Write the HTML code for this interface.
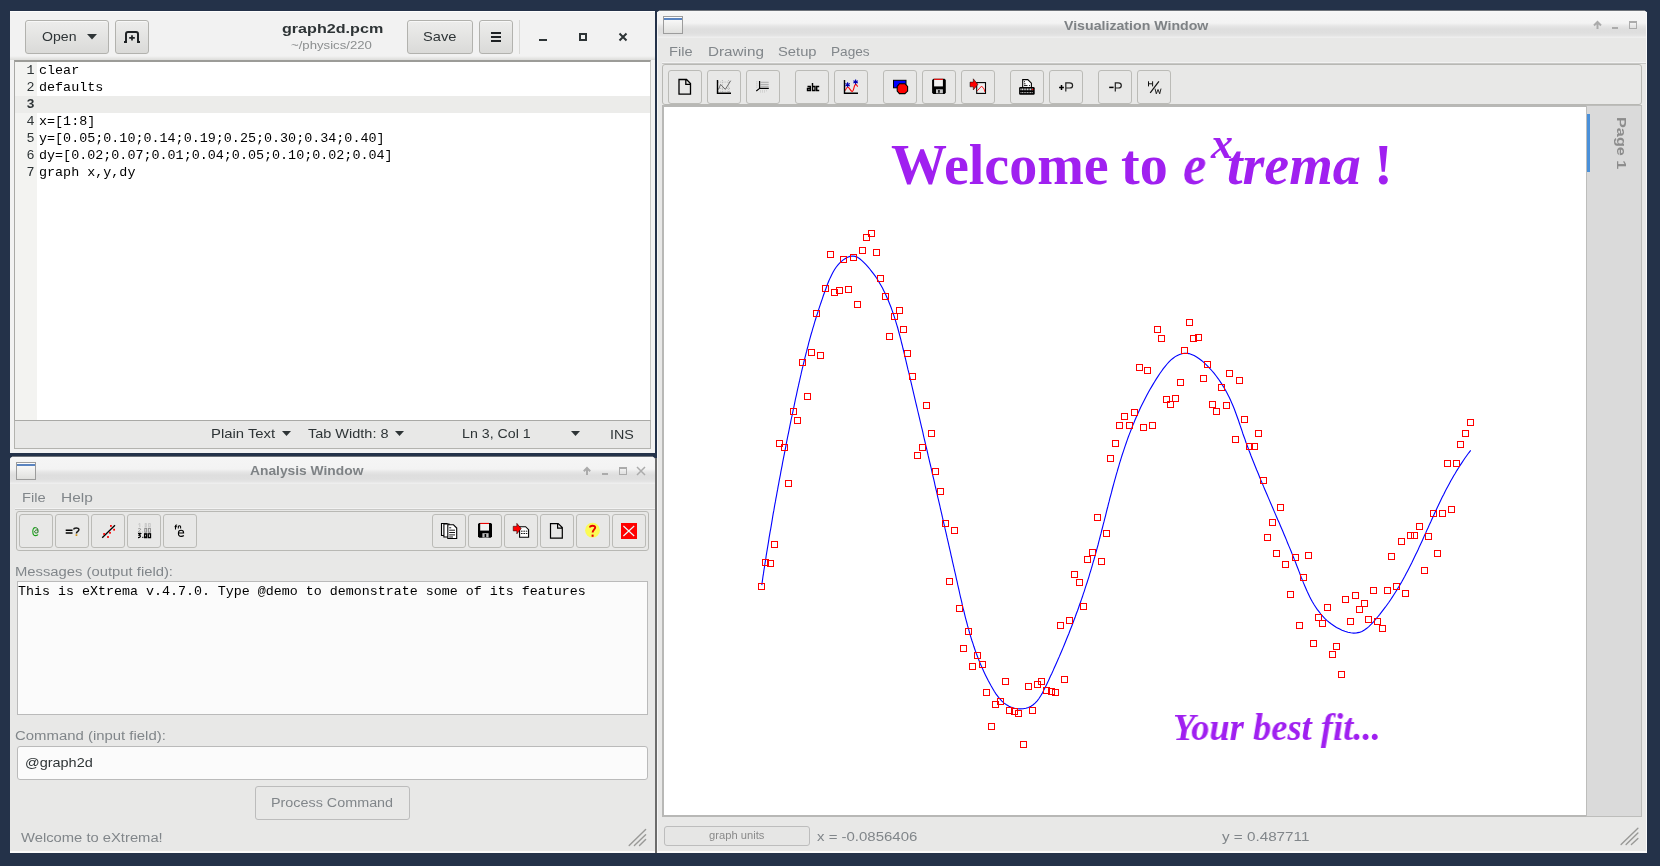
<!DOCTYPE html>
<html><head><meta charset="utf-8">
<style>
*{box-sizing:border-box;margin:0;padding:0}
html,body{width:1660px;height:866px;overflow:hidden;background:#243249;font-family:"Liberation Sans",sans-serif}
.a{position:absolute}
.t{position:absolute;white-space:nowrap;line-height:1;transform-origin:0 0;will-change:transform}
.mono{font-family:"Liberation Mono",monospace;will-change:transform}
.btn{position:absolute;border:1px solid #b2b2ae;border-radius:3px;background:linear-gradient(#ededec,#dadad8);box-shadow:inset 0 1px #f8f8f8}
.tb{position:absolute;width:34px;height:34px;border:1px solid #bbbbb7;border-radius:3px;background:#e8e8e7}
.tbar{position:absolute;background:linear-gradient(#f9f9f9 0px,#f5f5f5 2px,#f3f3f3 12px,#e6e6e6 15px,#dedede 18px,#dfdfdf 22px,#e5e5e5 25px,#eeeeee 26px,#eeeeee 27px)}
svg{position:absolute;overflow:visible}
</style></head><body>

<!-- ================= GEDIT WINDOW ================= -->
<div class="a" style="left:10px;top:11px;width:645px;height:442px;background:#f2f2f2"></div>
<div class="a" style="left:10px;top:11px;width:645px;height:1px;background:#fdfdfd"></div>
<div class="a" style="left:10px;top:56px;width:645px;height:4px;background:linear-gradient(#f2f2f2,#dcdcda)"></div>
<div class="btn" style="left:25px;top:20px;width:84px;height:34px"></div>
<svg style="left:87px;top:34px" width="11" height="7"><path d="M0,0 L10,0 L5,5.5 Z" fill="#2e3436"/></svg>
<div class="btn" style="left:115px;top:20px;width:34px;height:34px"></div>

<div class="btn" style="left:407px;top:20px;width:66px;height:34px"></div>
<div class="btn" style="left:479px;top:20px;width:34px;height:34px"></div>
<div class="a" style="left:491px;top:32px;width:10px;height:2px;background:#1e2224"></div>
<div class="a" style="left:491px;top:36px;width:10px;height:2px;background:#1e2224"></div>
<div class="a" style="left:491px;top:40px;width:10px;height:2px;background:#1e2224"></div>
<div class="a" style="left:519px;top:20px;width:1px;height:34px;background:#d9d9d7"></div>
<div class="a" style="left:539px;top:38.5px;width:8px;height:2.5px;background:#2e3436"></div>
<div class="a" style="left:579px;top:33px;width:8px;height:8px;border:2px solid #2e3436"></div>
<svg style="left:619px;top:33px" width="8" height="8"><path d="M0.5,0.5 L7.5,7.5 M7.5,0.5 L0.5,7.5" stroke="#2e3436" stroke-width="2"/></svg>

<!-- text view -->
<div class="a" style="left:14px;top:60px;width:637px;height:361px;background:#fff;border-left:1px solid #a9a9a6;border-top:2px solid #9c9c98;border-right:1px solid #c8c8c5"></div>
<div class="a" style="left:15px;top:62px;width:22px;height:358px;background:#f3f3f1"></div>
<div class="a" style="left:15px;top:96px;width:635px;height:17px;background:#ececea"></div>
<div class="mono" style="position:absolute;left:15px;top:62px;width:19.5px;text-align:right;font-size:13.4px;line-height:17px;color:#2e3436">1<br>2<br><b>3</b><br>4<br>5<br>6<br>7</div>
<div class="mono" style="position:absolute;left:39px;top:62px;font-size:13.4px;line-height:17px;color:#000;white-space:pre">clear
defaults

x=[1:8]
y=[0.05;0.10;0.14;0.19;0.25;0.30;0.34;0.40]
dy=[0.02;0.07;0.01;0.04;0.05;0.10;0.02;0.04]
graph x,y,dy</div>
<!-- status bar -->
<div class="a" style="left:14px;top:420px;width:637px;height:29px;background:#e8e8e7;border:1px solid #b3b3af;border-top-color:#a9a9a6"></div>
<svg style="left:282px;top:431px" width="10" height="6"><path d="M0,0 L9,0 L4.5,5 Z" fill="#2e3436"/></svg>
<svg style="left:395px;top:431px" width="10" height="6"><path d="M0,0 L9,0 L4.5,5 Z" fill="#2e3436"/></svg>
<svg style="left:571px;top:431px" width="10" height="6"><path d="M0,0 L9,0 L4.5,5 Z" fill="#2e3436"/></svg>

<!-- ================= ANALYSIS WINDOW ================= -->
<div class="a" style="left:10px;top:457px;width:645px;height:396px;background:#e8e8e7;border-radius:3px 3px 0 0;overflow:hidden">
  <div class="tbar" style="left:0;top:0;width:645px;height:27px"></div>
</div>
<div class="a" style="left:16px;top:462px;width:20px;height:18px;border:1px solid #9c9c9c;background:linear-gradient(#fdfdfd,#e0e0de)"></div>
<div class="a" style="left:17px;top:464px;width:18px;height:2px;background:#5a84c0"></div>
<svg style="left:583px;top:467px" width="9" height="9"><path d="M4,8 L4,1.5 M0.8,4.3 L4,1 L7.2,4.3" fill="none" stroke="#ababab" stroke-width="2"/></svg>
<div class="a" style="left:602px;top:473px;width:6px;height:2px;background:#ababab"></div>
<div class="a" style="left:619px;top:467px;width:8px;height:8px;border:1px solid #ababab;border-top-width:2px"></div>
<svg style="left:636px;top:466px" width="10" height="10"><path d="M1,1 L9,9 M9,1 L1,9" stroke="#ababab" stroke-width="1.5"/></svg>
<div class="a" style="left:15px;top:508px;width:640px;height:1px;background:#f2f2f2"></div><div class="a" style="left:15px;top:509px;width:640px;height:1px;background:#c8c8c6"></div>
<div class="a" style="left:16px;top:511px;width:633px;height:40px;border:1px solid #b8b8b4;border-radius:3px"></div>
<div class="tb" style="left:19px;top:514px"></div>
<div class="tb" style="left:55px;top:514px"></div>
<div class="tb" style="left:91px;top:514px"></div>
<div class="tb" style="left:127px;top:514px"></div>
<div class="tb" style="left:163px;top:514px"></div>
<div class="tb" style="left:432px;top:514px"></div>
<div class="tb" style="left:468px;top:514px"></div>
<div class="tb" style="left:504px;top:514px"></div>
<div class="tb" style="left:540px;top:514px"></div>
<div class="tb" style="left:576px;top:514px"></div>
<div class="tb" style="left:612px;top:514px"></div>
<div class="a" style="left:17px;top:581px;width:631px;height:134px;background:#fbfbfb;border:1px solid #bababa"></div>
<div class="a" style="left:17px;top:746px;width:631px;height:34px;background:#fbfbfb;border:1px solid #bababa;border-radius:3px"></div>
<div class="a" style="left:255px;top:786px;width:155px;height:34px;border:1px solid #bcbcbc;border-radius:3px;background:#e8e8e7"></div>


<div class="a" style="left:655px;top:458px;width:2px;height:395px;background:#6c6c6c"></div>
<!-- ================= VISUALIZATION WINDOW ================= -->
<div class="a" style="left:657px;top:11px;width:990px;height:842px;background:#e8e8e7;border-radius:3px 3px 0 0;overflow:hidden">
  <div class="tbar" style="left:0;top:0;width:990px;height:27px"></div>
</div>
<div class="a" style="left:663px;top:16px;width:20px;height:18px;border:1px solid #9c9c9c;background:linear-gradient(#fdfdfd,#e0e0de)"></div>
<div class="a" style="left:664px;top:18px;width:18px;height:2px;background:#5a84c0"></div>
<svg style="left:1593px;top:21px" width="9" height="9"><path d="M4.5,8 L4.5,1.5 M1,4.5 L4.5,1 L8,4.5" fill="none" stroke="#ababab" stroke-width="2"/></svg>
<div class="a" style="left:1612px;top:27px;width:6px;height:2px;background:#ababab"></div>
<div class="a" style="left:1629px;top:21px;width:8px;height:8px;border:1px solid #ababab;border-top-width:2px"></div>
<div class="a" style="left:662px;top:62px;width:985px;height:1px;background:#f2f2f2"></div><div class="a" style="left:662px;top:63px;width:985px;height:1px;background:#c8c8c6"></div>
<div class="a" style="left:662px;top:64px;width:980px;height:41px;border:1px solid #b8b8b4;border-radius:3px"></div>
<div class="tb" style="left:668px;top:70px"></div>
<div class="tb" style="left:707px;top:70px"></div>
<div class="tb" style="left:746px;top:70px"></div>
<div class="tb" style="left:795px;top:70px"></div>
<div class="tb" style="left:834px;top:70px"></div>
<div class="tb" style="left:883px;top:70px"></div>
<div class="tb" style="left:922px;top:70px"></div>
<div class="tb" style="left:961px;top:70px"></div>
<div class="tb" style="left:1010px;top:70px"></div>
<div class="tb" style="left:1049px;top:70px"></div>
<div class="tb" style="left:1098px;top:70px"></div>
<div class="tb" style="left:1137px;top:70px"></div>
<!-- plot area -->
<div class="a" style="left:662px;top:105px;width:925px;height:712px;background:#fff;border-left:2px solid #b8b8b6;border-top:2px solid #b8b8b6;border-bottom:2px solid #b8b8b6"></div>
<div class="a" style="left:1586px;top:105px;width:56px;height:712px;background:#dadada;border:1px solid #bdbdbb"></div>
<div class="a" style="left:1587px;top:114px;width:3px;height:58px;background:#4a90d9"></div>

<!-- status -->
<div class="a" style="left:664px;top:826px;width:146px;height:20px;border:1px solid #bdbdbd;border-radius:3px;background:#e6e6e5"></div>


<span class="t" style="left:42.10px;top:30px;font-family:'Liberation Sans';font-size:13px;color:#2e3436;transform:scaleX(1.0839)">Open</span>
<span class="t" style="left:282.10px;top:22px;font-family:'Liberation Sans';font-size:13.5px;font-weight:bold;color:#2e3436;transform:scaleX(1.1940)">graph2d.pcm</span>
<span class="t" style="left:291.46px;top:40px;font-family:'Liberation Sans';font-size:11.5px;color:#8b8e8f;transform:scaleX(1.1449)">~/physics/220</span>
<span class="t" style="left:423.27px;top:30px;font-family:'Liberation Sans';font-size:13px;color:#2e3436;transform:scaleX(1.1250)">Save</span>
<span class="t" style="left:211.06px;top:427px;font-family:'Liberation Sans';font-size:13px;color:#2e3436;transform:scaleX(1.1436)">Plain Text</span>
<span class="t" style="left:307.70px;top:427px;font-family:'Liberation Sans';font-size:13px;color:#2e3436;transform:scaleX(1.1139)">Tab Width: 8</span>
<span class="t" style="left:461.81px;top:427px;font-family:'Liberation Sans';font-size:13px;color:#2e3436;transform:scaleX(1.0919)">Ln 3, Col 1</span>
<span class="t" style="left:609.50px;top:428px;font-family:'Liberation Sans';font-size:13px;color:#2e3436;transform:scaleX(1.1000)">INS</span>
<span class="t" style="left:249.70px;top:464px;font-family:'Liberation Sans';font-size:13.3px;font-weight:bold;color:#7e8285;transform:scaleX(1.0382)">Analysis Window</span>
<span class="t" style="left:22.13px;top:492px;font-family:'Liberation Sans';font-size:12.5px;color:#81868a;transform:scaleX(1.1737)">File</span>
<span class="t" style="left:61.16px;top:492px;font-family:'Liberation Sans';font-size:12.5px;color:#81868a;transform:scaleX(1.2375)">Help</span>
<span class="t" style="left:15.22px;top:566px;font-family:'Liberation Sans';font-size:12.5px;color:#81868a;transform:scaleX(1.1841)">Messages (output field):</span>
<span class="t" style="left:18.30px;top:585px;font-family:'Liberation Mono';font-size:13px;color:#000;transform:scaleX(1.0248)">This is eXtrema v.4.7.0. Type @demo to demonstrate some of its features</span>
<span class="t" style="left:15.31px;top:730px;font-family:'Liberation Sans';font-size:12.5px;color:#81868a;transform:scaleX(1.1928)">Command (input field):</span>
<span class="t" style="left:25.09px;top:756px;font-family:'Liberation Sans';font-size:13px;color:#2e3436;transform:scaleX(1.1119)">@graph2d</span>
<span class="t" style="left:271.05px;top:797px;font-family:'Liberation Sans';font-size:12.5px;color:#81868a;transform:scaleX(1.1486)">Process Command</span>
<span class="t" style="left:20.50px;top:832px;font-family:'Liberation Sans';font-size:12.5px;color:#81868a;transform:scaleX(1.1815)">Welcome to eXtrema!</span>
<span class="t" style="left:1063.90px;top:19px;font-family:'Liberation Sans';font-size:13.3px;font-weight:bold;color:#7e8285;transform:scaleX(1.0647)">Visualization Window</span>
<span class="t" style="left:669.13px;top:46px;font-family:'Liberation Sans';font-size:12.5px;color:#81868a;transform:scaleX(1.1684)">File</span>
<span class="t" style="left:707.88px;top:46px;font-family:'Liberation Sans';font-size:12.5px;color:#81868a;transform:scaleX(1.2205)">Drawing</span>
<span class="t" style="left:778.22px;top:46px;font-family:'Liberation Sans';font-size:12.5px;color:#81868a;transform:scaleX(1.1806)">Setup</span>
<span class="t" style="left:831.21px;top:46px;font-family:'Liberation Sans';font-size:12.5px;color:#81868a;transform:scaleX(1.0912)">Pages</span>
<span class="t" style="left:708.90px;top:831px;font-family:'Liberation Sans';font-size:10px;color:#8a8a8a;transform:scaleX(1.1184)">graph units</span>
<span class="t" style="left:817.40px;top:831px;font-family:'Liberation Sans';font-size:12.5px;color:#81868a;transform:scaleX(1.1976)">x = -0.0856406</span>
<span class="t" style="left:1221.90px;top:831px;font-family:'Liberation Sans';font-size:12.5px;color:#81868a;transform:scaleX(1.2183)">y = 0.487711</span>
<span class="t" style="left:1626.8px;top:116.8px;font-family:'Liberation Sans';font-size:12.5px;font-weight:bold;color:#8c8c8c;transform:rotate(90deg) scaleX(1.3)">Page 1</span>

<span class="t" style="left:891px;top:137px;font-family:'Liberation Serif',serif;font-weight:bold;font-size:56px;color:#a020f0">Welcome</span>
<span class="t" style="left:1120.5px;top:137px;font-family:'Liberation Serif',serif;font-weight:bold;font-size:56px;color:#a020f0">to</span>
<span class="t" style="left:1183px;top:137px;font-family:'Liberation Serif',serif;font-weight:bold;font-style:italic;font-size:56px;color:#a020f0;transform:scaleX(0.94)">e</span>
<span class="t" style="left:1211px;top:121.5px;font-family:'Liberation Serif',serif;font-weight:bold;font-style:italic;font-size:44px;color:#a020f0">x</span>
<span class="t" style="left:1227px;top:137px;font-family:'Liberation Serif',serif;font-weight:bold;font-style:italic;font-size:56px;color:#a020f0">trema</span>
<span class="t" style="left:1374px;top:137px;font-family:'Liberation Serif',serif;font-weight:bold;font-size:56px;color:#a020f0">!</span>
<span class="t" style="left:1173px;top:708.5px;font-family:'Liberation Serif',serif;font-weight:bold;font-style:italic;font-size:37px;color:#a020f0;transform:scaleX(0.985)">Your best fit...</span>

<div class="a" style="left:10px;top:851px;width:645px;height:1.5px;background:#fafafa"></div>
<div class="a" style="left:657px;top:851px;width:990px;height:1.5px;background:#fafafa"></div>
<div class="a" style="left:1646px;top:12px;width:1px;height:840px;background:#fafafa"></div>
<div class="a" style="left:659px;top:10px;width:986px;height:1px;background:#6e737a"></div>
<div class="a" style="left:12px;top:456px;width:641px;height:1px;background:#6e737a"></div>
<div class="a" style="left:657px;top:12px;width:1px;height:840px;background:#f6f6f6"></div>
<svg width="1660" height="866" style="position:absolute;left:0;top:0;overflow:visible">
<!-- gedit new-tab icon -->
<path d="M126,42.8 L126,34 Q126,32 128,32 L136,32 Q138,32 138,34 L138,42.8" fill="none" stroke="#1f2325" stroke-width="2"/>
<path d="M124,42 L127,42 M137,42 L140,42" stroke="#1f2325" stroke-width="1.8"/>
<path d="M132,35.2 L132,40.6 M129.2,37.9 L134.8,37.9" stroke="#1f2325" stroke-width="1.7"/>
<!-- ===== Vis toolbar ===== -->
<!-- new page -->
<path d="M679,79.5 L686.5,79.5 L690.5,83.5 L690.5,94.2 L679,94.2 Z M685.8,79.5 L685.8,84.3 L690.5,84.3" fill="none" stroke="#000" stroke-width="1.3"/>
<!-- grid chart -->
<g stroke="#a8a8a8" stroke-width="0.8" stroke-dasharray="1 1.2"><path d="M718,82.1 L731,82.1 M718,88.4 L731,88.4 M718,91.3 L731,91.3 M722.4,80 L722.4,93 M728.6,80 L728.6,93"/></g>
<path d="M718.5,89.6 L720.6,84.4 L725.3,89.4 L730.7,80.7" fill="none" stroke="#6a6a6a" stroke-width="1"/>
<path d="M717.5,80 L717.5,93.3 L731,93.3" fill="none" stroke="#000" stroke-width="1.4"/>
<!-- axes -->
<path d="M760.5,82.3 L768.7,82.3 M760.5,84.4 L768.7,84.4 M760.5,86.3 L768.7,86.3" stroke="#9a9a9a" stroke-width="0.8"/>
<g stroke="#b0b0b0" stroke-width="0.7" stroke-dasharray="0.8 1.2"><path d="M756.5,81.5 L756.5,88 M758,81.5 L758,88 M760,90.8 L768,90.8 M760,92 L766,92"/></g>
<path d="M759.6,81 L759.6,88.4 L768.8,88.4 M759.6,88.4 L756.3,91" fill="none" stroke="#000" stroke-width="1.2"/>
<!-- abc -->
<path d="M807.5,86.5 L810.3,86.5 L810.3,90.5 L807.5,90.5 L807.5,88.5 L810.3,88.5 M812.5,83 L812.5,90.5 L815,90.5 L815,86.5 L812.5,86.5 M819.2,86.5 L816.7,86.5 L816.7,90.5 L819.2,90.5" fill="none" stroke="#000" stroke-width="1.4"/>
<!-- data chart -->
<path d="M845.2,90.6 C846.2,88.5 847,87 847.8,87 C849,87 850.8,91.5 852.2,91.5 C853.5,91.5 853.8,87.5 854.6,85.8 C855.1,84.7 855.6,84.2 856,84.4 C856.6,84.8 857.2,85.8 857.7,86.6" fill="none" stroke="#ff0000" stroke-width="1.1"/>
<path d="M844.5,80 L844.5,93.3 L858,93.3" fill="none" stroke="#000" stroke-width="1.4"/>
<g stroke="#0000b0" stroke-width="1.1"><path d="M847.6,82.3 L847.6,87.3 M845.4,83.6 L849.8,86 M849.8,83.6 L845.4,86"/><path d="M855.6,79.4 L855.6,84.4 M853.4,80.7 L857.8,83.1 M857.8,80.7 L853.4,83.1"/></g>
<!-- shapes -->
<rect x="893.5" y="80.3" width="12.5" height="7.5" fill="#0000ff" stroke="#000" stroke-width="1"/>
<path d="M899.4,83.7 L904.9,83.7 L907.6,86.4 L907.6,91.1 L904.9,93.6 L899.4,93.6 L897.2,91.1 L897.2,86.4 Z" fill="#ff0000" stroke="#000" stroke-width="1.1"/>
<!-- floppy -->
<path d="M933.5,78.8 L944.5,78.8 L945.8,80.1 L945.8,92.7 L944.6,93.9 L933.3,93.9 L932.1,92.7 L932.1,80.1 Z" fill="#000"/>
<rect x="934.1" y="79.6" width="8.8" height="6.8" fill="#f2f2f2"/>
<rect x="934.1" y="78.8" width="8.8" height="1" fill="#ff0000"/>
<rect x="936" y="89.3" width="6.9" height="4" fill="#c8c8c8"/><rect x="938.2" y="90" width="1.5" height="2.8" fill="#000"/>
<!-- import -->
<rect x="976.7" y="82.6" width="8.8" height="10.8" fill="#f0f0f0" stroke="#000" stroke-width="1.1"/>
<path d="M977.3,90.8 L981.6,86.1 L984.1,89 L984.8,91.9" fill="none" stroke="#ff0000" stroke-width="0.9"/>
<path d="M970,82.1 L973.3,82.1 L973.3,78.8 L977.8,84.4 L973.3,90 L973.3,86.8 L970,86.8 Z" fill="#ff0000" stroke="#000" stroke-width="0.5"/>
<!-- printer -->
<path d="M1022.7,79.6 L1027.8,79.6 L1031.4,83.2 L1031.4,87.5 L1022.7,87.5 Z" fill="#fff" stroke="#000" stroke-width="1.1"/>
<path d="M1024,81.7 L1025,81.7 M1024,83.8 L1025.5,83.8 M1024,85.6 L1027.5,85.6 M1029,85.6 L1030,85.6" stroke="#000" stroke-width="0.9"/>
<rect x="1019.1" y="87" width="15.6" height="7.7" rx="1.2" fill="#000"/>
<path d="M1020.5,89.4 L1033.3,89.4" stroke="#e8e8e8" stroke-width="1.6" stroke-dasharray="1 0.6"/>
<path d="M1020.5,92.6 L1033.3,92.6" stroke="#d0d0d0" stroke-width="1" stroke-dasharray="1 0.6"/>
<rect x="1032" y="88.8" width="1.3" height="1.3" fill="#ff0000"/>
<!-- +P -->
<path d="M1059.1,87.4 L1063.9,87.4 M1061.5,84.9 L1061.5,89.9" stroke="#000" stroke-width="1.5"/>
<path d="M1065.8,91.6 L1065.8,82.8 L1069.6,82.8 C1072,82.8 1072.6,84 1072.6,85.4 C1072.6,86.8 1072,88 1069.6,88 L1065.8,88" fill="none" stroke="#222" stroke-width="1.2"/>
<!-- -P -->
<path d="M1109.2,87.4 L1113.6,87.4" stroke="#000" stroke-width="1.5"/>
<path d="M1115.3,91.6 L1115.3,82.8 L1118.3,82.8 C1120.7,82.8 1121.3,84 1121.3,85.4 C1121.3,86.8 1120.7,88 1118.3,88 L1115.3,88" fill="none" stroke="#222" stroke-width="1.2"/>
<!-- H/W -->
<path d="M1148.5,81.3 L1148.5,86.4 M1152.6,81.3 L1152.6,86.4 M1148.5,83.8 L1152.6,83.8" stroke="#111" stroke-width="1"/>
<path d="M1150.2,92.9 L1158.9,81.3" stroke="#111" stroke-width="1.2"/>
<path d="M1155,88.6 L1156.3,93.8 L1158,89.5 L1159.7,93.8 L1161,88.6" fill="none" stroke="#111" stroke-width="0.9"/>

<!-- grips -->
<path d="M629.2,845.5 L645.6,829.6 M634.4,845.5 L645.6,834.8 M639.5,845.5 L645.6,839.4" stroke="#999997" stroke-width="1.4" stroke-linecap="round"/>
<path d="M1621.1,844.6 L1637.9,828.2 M1626.1,844.6 L1637.9,833.1 M1631.4,844.6 L1637.9,838.5" stroke="#999997" stroke-width="1.4" stroke-linecap="round"/>
<!-- ===== Analysis toolbar ===== -->
<!-- @ green -->
<path d="M35.4,527.6 C33.5,527.4 32.8,529.5 32.8,531.4 C32.8,533.6 33.6,535.6 35.6,535.6 C37,535.6 37.8,535 38,534.6" fill="none" stroke="#1aa01a" stroke-width="1.1"/>
<path d="M35.4,527.6 C37.4,527.6 38,529.4 38,531 L38,532.5 M37.8,530 C36,529.6 34.6,530.6 34.6,531.8 C34.6,533 36.4,533.4 37.8,532.6" fill="none" stroke="#0c700c" stroke-width="1"/>
<!-- =? -->
<path d="M65.7,530.3 L72.5,530.3 M65.7,533 L72.5,533" stroke="#000" stroke-width="1.4"/>
<path d="M73.8,529.6 C73.8,527.6 78.9,527.4 78.9,529.7 C78.9,531.3 76.4,531.4 76.4,533.5" fill="none" stroke="#1a1a1a" stroke-width="1.5"/>
<rect x="75.6" y="534.3" width="1.7" height="1.6" fill="#d08a00"/>
<!-- fit line -->
<path d="M102.2,537.7 L115,525.3" stroke="#000" stroke-width="1.3"/>
<g fill="#ff0000"><rect x="110" y="525" width="1.8" height="1.8"/><rect x="113.2" y="528.8" width="1.8" height="1.8"/><rect x="109.1" y="531.9" width="1.8" height="1.8"/><rect x="103.2" y="533.1" width="1.8" height="1.8"/><rect x="107.1" y="536.1" width="1.8" height="1.8"/></g>
<!-- 1.00 2.00 3.00 -->
<g fill="none">
<path d="M138.4,524.3 L139.8,523.4 L139.8,527 M142.5,526.8 L142.5,527 M145.2,523.6 L145.2,526.8 M146.3,523.6 L146.3,526.8 M148.6,523.6 L148.6,526.8 M150.2,523.6 L150.2,526.8 M144.9,523.6 L146.6,523.6 M144.9,526.8 L146.6,526.8 M148.3,523.6 L150.5,523.6 M148.3,526.8 L150.5,526.8" stroke="#c4c4c4" stroke-width="0.9"/>
<path d="M138.2,529 C138.6,528.2 140.6,528.2 140.6,529.2 C140.6,530.2 138.2,531.2 138.2,532.2 L140.8,532.2 M142.5,531.8 L142.5,532.2" stroke="#8c8c8c" stroke-width="0.9"/>
<rect x="144.8" y="528.4" width="1.8" height="3.8" stroke="#8c8c8c" stroke-width="1"/>
<rect x="148.4" y="528.4" width="2" height="3.8" stroke="#8c8c8c" stroke-width="1"/>
<path d="M138,533.6 L140.6,533.6 L139.2,535.2 C141,535.2 141,537.8 138,537.6" stroke="#000" stroke-width="1.2"/>
<rect x="142.3" y="536.8" width="1" height="1.2" fill="#000"/>
<rect x="144.6" y="533.8" width="2" height="3.8" stroke="#000" stroke-width="1.3"/>
<rect x="148.3" y="533.8" width="2.2" height="3.8" stroke="#000" stroke-width="1.3"/>
</g>
<!-- fn e -->
<path d="M175.5,529.6 L175.5,526.2 C175.5,525.2 176.2,524.8 177,525.2 M174.6,526.6 L176.8,526.6 M178.3,528.6 L178.3,525.8 M178.3,526.4 C179,525.5 180.6,525.5 180.6,526.6 L180.6,528.6" fill="none" stroke="#000" stroke-width="1.05"/>
<path d="M178.6,533 L183.6,533 C183.6,531.2 182.6,530.3 181.1,530.3 C179.4,530.3 178.4,531.6 178.4,533.2 C178.4,535.4 179.6,536.4 181.2,536.4 C182.4,536.4 183.3,536 183.8,535.5" fill="none" stroke="#000" stroke-width="1.1"/>
<!-- stacked pages -->
<g stroke="#000" stroke-width="1.1" fill="#fff">
<path d="M441.5,523.5 L447,523.5 L447,535.5 L441.5,535.5 Z"/>
<path d="M443.9,524 L449,524 L449,537 L443.9,537 Z"/>
<path d="M447.8,524.8 L453.5,524.8 L456.7,528 L456.7,538.5 L447.8,538.5 Z"/>
</g>
<path d="M449.2,527.8 L451.2,527.8 M449.2,530.2 L455,530.2 M449.2,532.5 L455,532.5 M449.2,534.9 L455,534.9 M449.2,537 L453,537" stroke="#000" stroke-width="0.9"/>
<!-- floppy (analysis) -->
<path d="M479.2,522.9 L490.8,522.9 L492,524.1 L492,536.6 L490.8,537.8 L479.2,537.8 L478,536.6 L478,524.1 Z" fill="#000"/>
<rect x="480.2" y="523.9" width="8.8" height="6.7" fill="#f2f2f2"/>
<rect x="480.2" y="522.9" width="8.8" height="1" fill="#ff0000"/>
<rect x="482.4" y="533.2" width="6.2" height="4.3" fill="#c0c0c0"/><rect x="484.6" y="534" width="1.6" height="3" fill="#000"/>
<!-- arrow doc -->
<path d="M519.6,526.7 L525.6,526.7 L528.6,529.7 L528.6,537.3 L519.6,537.3 Z" fill="#fff" stroke="#000" stroke-width="1.1"/>
<path d="M521,531.2 L527.3,531.2 M521,533.5 L527.3,533.5" stroke="#000" stroke-width="0.9" stroke-dasharray="1.6 0.8"/>
<path d="M513.2,526.3 L516.8,526.3 L516.8,523.3 L521.2,528.6 L516.8,533.9 L516.8,530.9 L513.2,530.9 Z" fill="#ff0000" stroke="#000" stroke-width="0.5"/>
<!-- blank page -->
<path d="M550.5,523.6 L558.2,523.6 L562.3,527.6 L562.3,538.2 L550.5,538.2 Z M557.6,523.6 L557.6,528.2 L562.3,528.2" fill="none" stroke="#000" stroke-width="1.2"/>
<!-- help -->
<circle cx="592.5" cy="530.2" r="7.4" fill="#ffff30" opacity="0.8"/>
<path d="M590,527.6 C590,525.2 595.2,525 595.2,527.6 C595.2,529.6 592.6,529.8 592.6,532.6" fill="none" stroke="#e80000" stroke-width="1.9"/>
<rect x="591.6" y="534.6" width="2" height="2.2" fill="#e80000"/>
<!-- close -->
<rect x="621" y="523" width="16" height="16" fill="#ff0000"/>
<path d="M623.4,526 L634.2,536 M634.2,526 L623.4,536" stroke="#e8ffff" stroke-width="1.1"/>
</svg>

<svg width="1660" height="866" style="position:absolute;left:0;top:0">
<path d="M761.8,585.1 L762.2,582.2 L762.6,579.3 L763.0,576.3 L763.5,573.4 L763.9,570.4 L764.4,567.5 L764.8,564.5 L765.3,561.6 L765.8,558.6 L766.2,555.6 L766.7,552.7 L767.2,549.7 L767.7,546.7 L768.2,543.7 L768.7,540.7 L769.1,537.7 L769.6,534.8 L770.1,531.8 L770.7,528.8 L771.2,525.8 L771.7,522.8 L772.2,519.8 L772.7,516.7 L773.2,513.7 L773.8,510.7 L774.3,507.7 L774.8,504.7 L775.4,501.7 L775.9,498.7 L776.5,495.7 L777.0,492.7 L777.6,489.7 L778.1,486.6 L778.7,483.6 L779.2,480.6 L779.8,477.6 L780.4,474.6 L780.9,471.6 L781.5,468.6 L782.1,465.6 L782.6,462.6 L783.2,459.6 L783.8,456.6 L784.4,453.6 L785.0,450.6 L785.6,447.6 L786.1,444.7 L786.7,441.7 L787.3,438.7 L787.9,435.7 L788.5,432.8 L789.1,429.8 L789.7,426.8 L790.3,423.9 L790.9,420.9 L791.5,418.0 L792.2,415.0 L792.8,412.1 L793.4,409.2 L794.0,406.3 L794.6,403.3 L795.2,400.4 L795.8,397.5 L796.5,394.6 L797.1,391.7 L797.7,388.8 L798.4,385.9 L799.0,383.1 L799.7,380.2 L800.3,377.3 L801.0,374.4 L801.6,371.5 L802.3,368.6 L803.0,365.8 L803.7,362.9 L804.4,360.0 L805.1,357.1 L805.8,354.3 L806.6,351.4 L807.3,348.5 L808.1,345.6 L808.8,342.7 L809.6,339.8 L810.4,336.9 L811.2,334.0 L812.1,331.1 L812.9,328.2 L813.8,325.3 L814.6,322.4 L815.5,319.5 L816.4,316.5 L817.4,313.6 L818.3,310.7 L819.3,307.7 L820.3,304.7 L821.3,301.8 L822.3,298.8 L823.3,295.8 L824.4,292.8 L825.5,289.8 L826.6,286.8 L827.7,283.8 L828.9,280.8 L830.2,277.9 L831.6,275.0 L833.0,272.2 L834.6,269.5 L836.3,267.0 L838.2,264.6 L840.3,262.4 L842.6,260.4 L845.0,258.7 L847.5,257.3 L850.1,256.4 L852.6,256.0 L855.1,256.4 L857.5,257.3 L859.7,258.8 L861.9,260.6 L864.0,262.6 L866.0,264.7 L868.0,266.8 L869.8,269.0 L871.6,271.3 L873.4,273.6 L875.1,275.9 L876.7,278.3 L878.2,280.7 L879.7,283.2 L881.2,285.8 L882.6,288.3 L883.9,290.9 L885.2,293.6 L886.4,296.2 L887.6,299.0 L888.8,301.7 L889.9,304.5 L891.0,307.3 L892.0,310.1 L893.0,313.0 L894.0,315.8 L894.9,318.7 L895.8,321.7 L896.7,324.6 L897.6,327.5 L898.4,330.5 L899.2,333.5 L900.0,336.5 L900.8,339.5 L901.5,342.5 L902.3,345.5 L903.0,348.5 L903.8,351.6 L904.5,354.6 L905.2,357.6 L905.9,360.6 L906.6,363.6 L907.3,366.7 L908.0,369.7 L908.8,372.7 L909.5,375.7 L910.2,378.7 L910.9,381.7 L911.6,384.7 L912.3,387.7 L913.0,390.7 L913.7,393.6 L914.4,396.6 L915.1,399.6 L915.8,402.6 L916.5,405.5 L917.2,408.5 L917.9,411.5 L918.6,414.4 L919.3,417.4 L920.0,420.4 L920.7,423.3 L921.4,426.3 L922.1,429.2 L922.8,432.2 L923.4,435.1 L924.1,438.1 L924.8,441.0 L925.5,444.0 L926.2,446.9 L926.9,449.9 L927.6,452.8 L928.2,455.7 L928.9,458.7 L929.6,461.6 L930.3,464.5 L931.0,467.5 L931.7,470.4 L932.3,473.3 L933.0,476.3 L933.7,479.2 L934.4,482.1 L935.0,485.1 L935.7,488.0 L936.4,490.9 L937.1,493.8 L937.7,496.8 L938.4,499.7 L939.1,502.6 L939.8,505.5 L940.4,508.5 L941.1,511.4 L941.8,514.3 L942.4,517.2 L943.1,520.2 L943.8,523.1 L944.5,526.0 L945.1,528.9 L945.8,531.9 L946.5,534.8 L947.1,537.7 L947.8,540.6 L948.5,543.6 L949.1,546.5 L949.8,549.4 L950.5,552.4 L951.1,555.3 L951.8,558.2 L952.4,561.1 L953.1,564.1 L953.8,567.0 L954.4,570.0 L955.1,572.9 L955.8,575.8 L956.4,578.8 L957.1,581.7 L957.7,584.7 L958.4,587.6 L959.1,590.6 L959.7,593.5 L960.4,596.5 L961.1,599.4 L961.8,602.4 L962.4,605.3 L963.1,608.3 L963.9,611.2 L964.6,614.2 L965.3,617.1 L966.1,620.1 L966.9,623.0 L967.6,625.9 L968.5,628.9 L969.3,631.8 L970.1,634.7 L971.0,637.6 L971.9,640.5 L972.9,643.4 L973.8,646.3 L974.8,649.2 L975.8,652.1 L976.9,655.0 L978.0,657.9 L979.1,660.7 L980.3,663.6 L981.5,666.4 L982.8,669.3 L984.0,672.1 L985.4,674.9 L986.8,677.7 L988.2,680.5 L989.7,683.3 L991.2,686.1 L992.8,688.8 L994.4,691.5 L996.1,694.1 L998.0,696.6 L999.9,699.0 L1001.9,701.1 L1004.1,703.1 L1006.5,704.8 L1009.0,706.3 L1011.7,707.4 L1014.5,708.2 L1017.3,708.7 L1020.2,708.9 L1023.1,708.8 L1025.9,708.3 L1028.5,707.4 L1031.0,706.2 L1033.2,704.7 L1035.3,702.9 L1037.2,700.8 L1039.0,698.5 L1040.6,696.0 L1042.2,693.4 L1043.6,690.6 L1045.0,687.8 L1046.4,684.9 L1047.8,682.1 L1049.1,679.2 L1050.4,676.3 L1051.8,673.5 L1053.1,670.6 L1054.3,667.8 L1055.6,664.9 L1056.9,662.1 L1058.1,659.2 L1059.4,656.4 L1060.6,653.5 L1061.8,650.7 L1063.0,647.9 L1064.2,645.0 L1065.3,642.2 L1066.5,639.3 L1067.6,636.5 L1068.8,633.7 L1069.9,630.8 L1071.0,628.0 L1072.1,625.2 L1073.2,622.3 L1074.2,619.5 L1075.3,616.7 L1076.3,613.8 L1077.4,611.0 L1078.4,608.2 L1079.4,605.3 L1080.4,602.5 L1081.4,599.6 L1082.4,596.8 L1083.3,593.9 L1084.3,591.1 L1085.2,588.2 L1086.1,585.4 L1087.1,582.5 L1088.0,579.7 L1088.9,576.8 L1089.7,573.9 L1090.6,571.1 L1091.5,568.2 L1092.3,565.3 L1093.1,562.4 L1094.0,559.5 L1094.8,556.6 L1095.6,553.8 L1096.4,550.9 L1097.2,547.9 L1098.0,545.0 L1098.7,542.1 L1099.5,539.2 L1100.2,536.3 L1101.0,533.4 L1101.7,530.5 L1102.5,527.5 L1103.2,524.6 L1104.0,521.7 L1104.7,518.8 L1105.5,515.8 L1106.2,512.9 L1106.9,510.0 L1107.7,507.0 L1108.4,504.1 L1109.2,501.2 L1109.9,498.2 L1110.7,495.3 L1111.5,492.4 L1112.2,489.5 L1113.0,486.5 L1113.8,483.6 L1114.6,480.7 L1115.4,477.8 L1116.2,474.9 L1117.1,471.9 L1117.9,469.0 L1118.8,466.1 L1119.6,463.2 L1120.5,460.3 L1121.4,457.4 L1122.3,454.5 L1123.3,451.6 L1124.2,448.8 L1125.2,445.9 L1126.2,443.0 L1127.2,440.1 L1128.2,437.3 L1129.3,434.4 L1130.4,431.6 L1131.5,428.7 L1132.6,425.9 L1133.8,423.1 L1134.9,420.3 L1136.1,417.5 L1137.4,414.7 L1138.6,411.9 L1139.9,409.1 L1141.2,406.3 L1142.6,403.5 L1144.0,400.8 L1145.4,398.0 L1146.8,395.3 L1148.3,392.6 L1149.8,389.8 L1151.4,387.1 L1153.0,384.4 L1154.6,381.8 L1156.2,379.1 L1158.0,376.4 L1159.7,373.8 L1161.5,371.2 L1163.3,368.7 L1165.2,366.3 L1167.1,364.0 L1169.0,361.9 L1171.0,359.9 L1173.1,358.2 L1175.2,356.6 L1177.4,355.4 L1179.6,354.4 L1181.9,353.7 L1184.2,353.3 L1186.6,353.3 L1189.0,353.6 L1191.5,354.4 L1194.1,355.5 L1196.6,357.0 L1199.2,358.7 L1201.8,360.7 L1204.3,362.9 L1206.9,365.3 L1209.3,367.8 L1211.7,370.5 L1214.0,373.2 L1216.2,376.0 L1218.3,378.8 L1220.2,381.6 L1222.0,384.4 L1223.8,387.2 L1225.4,389.9 L1226.9,392.7 L1228.3,395.5 L1229.7,398.2 L1230.9,401.0 L1232.1,403.7 L1233.3,406.5 L1234.4,409.3 L1235.4,412.0 L1236.4,414.7 L1237.4,417.5 L1238.4,420.2 L1239.3,423.0 L1240.2,425.7 L1241.2,428.5 L1242.1,431.2 L1243.0,434.0 L1244.0,436.7 L1245.0,439.4 L1245.9,442.2 L1247.0,444.9 L1248.0,447.7 L1249.0,450.5 L1250.1,453.2 L1251.1,456.0 L1252.2,458.7 L1253.3,461.5 L1254.4,464.2 L1255.5,467.0 L1256.6,469.8 L1257.8,472.5 L1258.9,475.3 L1260.0,478.1 L1261.2,480.9 L1262.4,483.6 L1263.5,486.4 L1264.7,489.2 L1265.9,492.0 L1267.1,494.8 L1268.3,497.6 L1269.5,500.4 L1270.7,503.2 L1271.9,506.0 L1273.1,508.8 L1274.3,511.6 L1275.5,514.4 L1276.7,517.2 L1277.9,520.0 L1279.2,522.8 L1280.4,525.7 L1281.6,528.5 L1282.8,531.3 L1284.0,534.2 L1285.2,537.0 L1286.4,539.9 L1287.5,542.7 L1288.7,545.6 L1289.9,548.4 L1291.1,551.3 L1292.2,554.1 L1293.4,557.0 L1294.5,559.9 L1295.7,562.8 L1296.8,565.7 L1297.9,568.5 L1299.0,571.4 L1300.1,574.3 L1301.2,577.2 L1302.4,580.1 L1303.5,582.9 L1304.7,585.7 L1305.9,588.5 L1307.1,591.3 L1308.4,594.0 L1309.7,596.7 L1311.1,599.4 L1312.5,602.0 L1314.0,604.5 L1315.6,607.0 L1317.2,609.4 L1319.0,611.7 L1320.8,614.0 L1322.7,616.2 L1324.7,618.3 L1326.8,620.3 L1329.1,622.2 L1331.4,624.0 L1333.9,625.7 L1336.5,627.4 L1339.2,628.8 L1342.0,630.2 L1344.9,631.3 L1347.9,632.2 L1350.8,632.8 L1353.7,633.1 L1356.6,632.9 L1359.3,632.4 L1361.9,631.4 L1364.4,630.0 L1366.8,628.3 L1369.1,626.3 L1371.3,624.1 L1373.5,621.8 L1375.6,619.4 L1377.6,617.0 L1379.6,614.6 L1381.5,612.1 L1383.4,609.7 L1385.3,607.2 L1387.1,604.7 L1388.9,602.2 L1390.6,599.7 L1392.3,597.1 L1394.0,594.5 L1395.6,592.0 L1397.2,589.4 L1398.8,586.8 L1400.4,584.1 L1401.9,581.5 L1403.3,578.9 L1404.8,576.2 L1406.2,573.5 L1407.6,570.9 L1409.0,568.2 L1410.4,565.5 L1411.8,562.8 L1413.1,560.1 L1414.4,557.3 L1415.7,554.6 L1417.0,551.9 L1418.3,549.2 L1419.5,546.4 L1420.8,543.7 L1422.1,540.9 L1423.3,538.2 L1424.5,535.4 L1425.8,532.7 L1427.0,529.9 L1428.3,527.2 L1429.5,524.4 L1430.8,521.7 L1432.0,519.0 L1433.3,516.2 L1434.5,513.5 L1435.8,510.7 L1437.1,508.0 L1438.4,505.3 L1439.7,502.6 L1441.0,499.8 L1442.3,497.1 L1443.7,494.4 L1445.0,491.7 L1446.4,489.1 L1447.8,486.4 L1449.3,483.7 L1450.7,481.1 L1452.2,478.4 L1453.7,475.8 L1455.3,473.2 L1456.8,470.6 L1458.5,468.0 L1460.1,465.4 L1461.8,462.9 L1463.5,460.3 L1465.2,457.8 L1467.0,455.3 L1468.8,452.8 L1470.7,450.3" fill="none" stroke="#0000ff" stroke-width="1.1"/>
<g fill="none" stroke="#ff0000" stroke-width="1" shape-rendering="crispEdges"><rect x="868.5" y="230.5" width="6" height="6"/><rect x="863.5" y="234.5" width="6" height="6"/><rect x="859.5" y="247.5" width="6" height="6"/><rect x="873.5" y="249.5" width="6" height="6"/><rect x="827.5" y="251.5" width="6" height="6"/><rect x="840.5" y="256.5" width="6" height="6"/><rect x="850.5" y="254.5" width="6" height="6"/><rect x="877.5" y="275.5" width="6" height="6"/><rect x="822.5" y="285.5" width="6" height="6"/><rect x="831.5" y="289.5" width="6" height="6"/><rect x="836.5" y="287.5" width="6" height="6"/><rect x="845.5" y="286.5" width="6" height="6"/><rect x="854.5" y="301.5" width="6" height="6"/><rect x="882.5" y="293.5" width="6" height="6"/><rect x="896.5" y="307.5" width="6" height="6"/><rect x="891.5" y="313.5" width="6" height="6"/><rect x="813.5" y="310.5" width="6" height="6"/><rect x="900.5" y="326.5" width="6" height="6"/><rect x="886.5" y="333.5" width="6" height="6"/><rect x="808.5" y="349.5" width="6" height="6"/><rect x="817.5" y="352.5" width="6" height="6"/><rect x="799.5" y="359.5" width="6" height="6"/><rect x="904.5" y="350.5" width="6" height="6"/><rect x="909.5" y="373.5" width="6" height="6"/><rect x="804.5" y="393.5" width="6" height="6"/><rect x="923.5" y="402.5" width="6" height="6"/><rect x="790.5" y="408.5" width="6" height="6"/><rect x="794.5" y="417.5" width="6" height="6"/><rect x="776.5" y="440.5" width="6" height="6"/><rect x="781.5" y="444.5" width="6" height="6"/><rect x="785.5" y="480.5" width="6" height="6"/><rect x="771.5" y="541.5" width="6" height="6"/><rect x="762.5" y="559.5" width="6" height="6"/><rect x="767.5" y="560.5" width="6" height="6"/><rect x="758.5" y="583.5" width="6" height="6"/><rect x="928.5" y="430.5" width="6" height="6"/><rect x="919.5" y="444.5" width="6" height="6"/><rect x="914.5" y="452.5" width="6" height="6"/><rect x="932.5" y="468.5" width="6" height="6"/><rect x="937.5" y="488.5" width="6" height="6"/><rect x="942.5" y="520.5" width="6" height="6"/><rect x="951.5" y="527.5" width="6" height="6"/><rect x="946.5" y="578.5" width="6" height="6"/><rect x="956.5" y="605.5" width="6" height="6"/><rect x="965.5" y="628.5" width="6" height="6"/><rect x="960.5" y="645.5" width="6" height="6"/><rect x="974.5" y="652.5" width="6" height="6"/><rect x="969.5" y="663.5" width="6" height="6"/><rect x="979.5" y="661.5" width="6" height="6"/><rect x="983.5" y="689.5" width="6" height="6"/><rect x="1002.5" y="678.5" width="6" height="6"/><rect x="992.5" y="701.5" width="6" height="6"/><rect x="997.5" y="698.5" width="6" height="6"/><rect x="988.5" y="723.5" width="6" height="6"/><rect x="1006.5" y="707.5" width="6" height="6"/><rect x="1011.5" y="708.5" width="6" height="6"/><rect x="1015.5" y="710.5" width="6" height="6"/><rect x="1020.5" y="741.5" width="6" height="6"/><rect x="1025.5" y="683.5" width="6" height="6"/><rect x="1029.5" y="707.5" width="6" height="6"/><rect x="1034.5" y="681.5" width="6" height="6"/><rect x="1038.5" y="678.5" width="6" height="6"/><rect x="1043.5" y="687.5" width="6" height="6"/><rect x="1048.5" y="688.5" width="6" height="6"/><rect x="1052.5" y="689.5" width="6" height="6"/><rect x="1061.5" y="676.5" width="6" height="6"/><rect x="1057.5" y="622.5" width="6" height="6"/><rect x="1066.5" y="617.5" width="6" height="6"/><rect x="1080.5" y="603.5" width="6" height="6"/><rect x="1076.5" y="579.5" width="6" height="6"/><rect x="1071.5" y="571.5" width="6" height="6"/><rect x="1084.5" y="556.5" width="6" height="6"/><rect x="1089.5" y="549.5" width="6" height="6"/><rect x="1098.5" y="558.5" width="6" height="6"/><rect x="1186.5" y="319.5" width="6" height="6"/><rect x="1154.5" y="326.5" width="6" height="6"/><rect x="1158.5" y="335.5" width="6" height="6"/><rect x="1190.5" y="335.5" width="6" height="6"/><rect x="1195.5" y="334.5" width="6" height="6"/><rect x="1181.5" y="347.5" width="6" height="6"/><rect x="1136.5" y="364.5" width="6" height="6"/><rect x="1144.5" y="367.5" width="6" height="6"/><rect x="1204.5" y="361.5" width="6" height="6"/><rect x="1226.5" y="370.5" width="6" height="6"/><rect x="1236.5" y="377.5" width="6" height="6"/><rect x="1177.5" y="379.5" width="6" height="6"/><rect x="1200.5" y="375.5" width="6" height="6"/><rect x="1218.5" y="384.5" width="6" height="6"/><rect x="1163.5" y="396.5" width="6" height="6"/><rect x="1172.5" y="395.5" width="6" height="6"/><rect x="1167.5" y="401.5" width="6" height="6"/><rect x="1209.5" y="401.5" width="6" height="6"/><rect x="1213.5" y="408.5" width="6" height="6"/><rect x="1223.5" y="402.5" width="6" height="6"/><rect x="1121.5" y="413.5" width="6" height="6"/><rect x="1131.5" y="409.5" width="6" height="6"/><rect x="1116.5" y="422.5" width="6" height="6"/><rect x="1126.5" y="422.5" width="6" height="6"/><rect x="1140.5" y="424.5" width="6" height="6"/><rect x="1149.5" y="422.5" width="6" height="6"/><rect x="1241.5" y="416.5" width="6" height="6"/><rect x="1255.5" y="430.5" width="6" height="6"/><rect x="1232.5" y="436.5" width="6" height="6"/><rect x="1246.5" y="443.5" width="6" height="6"/><rect x="1251.5" y="443.5" width="6" height="6"/><rect x="1112.5" y="440.5" width="6" height="6"/><rect x="1107.5" y="455.5" width="6" height="6"/><rect x="1260.5" y="477.5" width="6" height="6"/><rect x="1094.5" y="514.5" width="6" height="6"/><rect x="1103.5" y="530.5" width="6" height="6"/><rect x="1277.5" y="504.5" width="6" height="6"/><rect x="1269.5" y="519.5" width="6" height="6"/><rect x="1264.5" y="534.5" width="6" height="6"/><rect x="1273.5" y="550.5" width="6" height="6"/><rect x="1282.5" y="561.5" width="6" height="6"/><rect x="1292.5" y="554.5" width="6" height="6"/><rect x="1305.5" y="552.5" width="6" height="6"/><rect x="1300.5" y="574.5" width="6" height="6"/><rect x="1287.5" y="591.5" width="6" height="6"/><rect x="1296.5" y="622.5" width="6" height="6"/><rect x="1310.5" y="640.5" width="6" height="6"/><rect x="1315.5" y="614.5" width="6" height="6"/><rect x="1319.5" y="620.5" width="6" height="6"/><rect x="1324.5" y="604.5" width="6" height="6"/><rect x="1333.5" y="643.5" width="6" height="6"/><rect x="1329.5" y="651.5" width="6" height="6"/><rect x="1338.5" y="671.5" width="6" height="6"/><rect x="1342.5" y="596.5" width="6" height="6"/><rect x="1347.5" y="618.5" width="6" height="6"/><rect x="1352.5" y="592.5" width="6" height="6"/><rect x="1361.5" y="600.5" width="6" height="6"/><rect x="1356.5" y="606.5" width="6" height="6"/><rect x="1365.5" y="616.5" width="6" height="6"/><rect x="1374.5" y="618.5" width="6" height="6"/><rect x="1379.5" y="625.5" width="6" height="6"/><rect x="1370.5" y="587.5" width="6" height="6"/><rect x="1384.5" y="587.5" width="6" height="6"/><rect x="1393.5" y="583.5" width="6" height="6"/><rect x="1402.5" y="590.5" width="6" height="6"/><rect x="1388.5" y="553.5" width="6" height="6"/><rect x="1398.5" y="538.5" width="6" height="6"/><rect x="1407.5" y="532.5" width="6" height="6"/><rect x="1411.5" y="532.5" width="6" height="6"/><rect x="1416.5" y="523.5" width="6" height="6"/><rect x="1425.5" y="533.5" width="6" height="6"/><rect x="1421.5" y="567.5" width="6" height="6"/><rect x="1434.5" y="550.5" width="6" height="6"/><rect x="1430.5" y="510.5" width="6" height="6"/><rect x="1439.5" y="510.5" width="6" height="6"/><rect x="1448.5" y="506.5" width="6" height="6"/><rect x="1444.5" y="460.5" width="6" height="6"/><rect x="1453.5" y="460.5" width="6" height="6"/><rect x="1457.5" y="441.5" width="6" height="6"/><rect x="1462.5" y="430.5" width="6" height="6"/><rect x="1467.5" y="419.5" width="6" height="6"/></g>
</svg>
</body></html>
